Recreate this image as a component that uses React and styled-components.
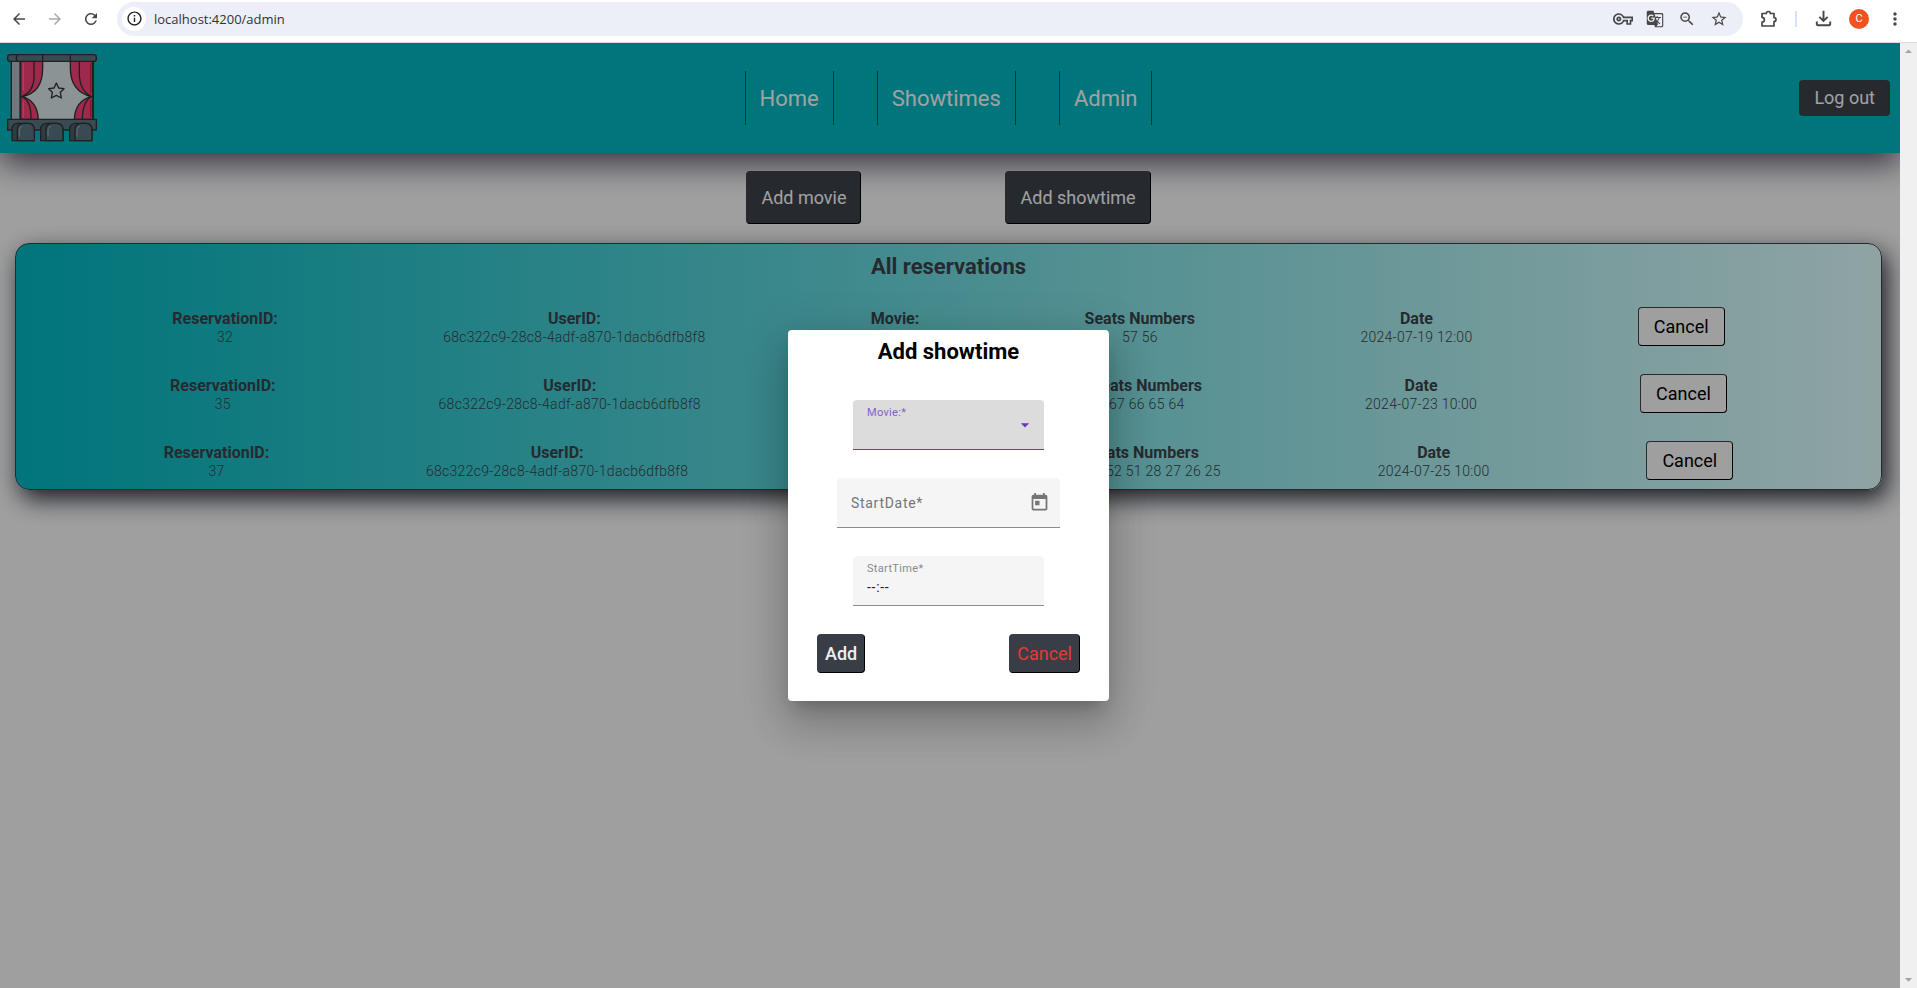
import React from "react";
import styled, { createGlobalStyle, css } from "styled-components";
import {
  MdArrowBack,
  MdArrowForward,
  MdRefresh,
  MdInfoOutline,
  MdOutlineVpnKey,
  MdGTranslate,
  MdZoomOut,
  MdStarBorder,
  MdOutlineFileDownload,
  MdMoreVert,
  MdToday,
  MdArrowDropDown,
  MdArrowDropUp,
} from "react-icons/md";

const GlobalStyle = createGlobalStyle`
  *, *::before, *::after { box-sizing: border-box; }
  body {
    margin: 0;
    font-family: Roboto, "Liberation Sans", sans-serif;
    color: #393e46;
    background: #ebebeb;
  }
  button, input, select { font-family: inherit; margin: 0; }
  h1, h2, p, dl, dd, ul { margin: 0; padding: 0; }
`;

const Shell = styled.div`
  display: grid;
  grid-template-rows: auto 1fr;
  height: 100vh;
`;

/* Browser toolbar */

const Toolbar = styled.div`
  display: flex;
  align-items: center;
  height: 43px;
  padding: 0 10px 5px 7px;
  gap: 14px;
  background: #fff;
  border-bottom: 1px solid #dcdcdc;
`;

const HistoryButtons = styled.div`
  display: flex;
  gap: 12px;
`;

const ToolButton = styled.button`
  display: grid;
  place-items: center;
  width: 24px;
  height: 24px;
  padding: 0;
  border: 0;
  background: none;
  color: ${(p) => (p.$faded ? "#a9a9a9" : "#474747")};
  font-size: ${(p) => p.$size || 18}px;
`;

const Omnibox = styled.div`
  flex: 1;
  display: flex;
  align-items: center;
  gap: 8px;
  height: 34px;
  padding: 0 12px 0 5px;
  border-radius: 17px;
  background: #eceef8;
`;

const SiteInfo = styled.button`
  display: grid;
  place-items: center;
  width: 24px;
  height: 24px;
  padding: 0;
  border: 0;
  border-radius: 50%;
  background: #fff;
  color: #1f1f1f;
  font-size: 17px;
`;

const Address = styled.input`
  flex: 1;
  min-width: 0;
  padding: 0;
  border: 0;
  outline: 0;
  background: none;
  color: #333;
  font-family: "Open Sans", "Noto Sans", sans-serif;
  font-size: 13px;
`;

const OmniActions = styled.div`
  display: flex;
  gap: 8px;
`;

const Divider = styled.span`
  width: 2px;
  height: 16px;
  background: #d3e3fd;
`;

const Avatar = styled.button`
  width: 20px;
  height: 20px;
  padding: 0;
  border: 0;
  border-radius: 50%;
  background: #f4511e;
  color: #fff;
  font-size: 11px;
`;

/* Page viewport and scroll bar */

const Viewport = styled.div`
  display: grid;
  grid-template-columns: 1fr 17px;
  min-height: 0;
`;

const ScrollBar = styled.div`
  display: flex;
  flex-direction: column;
  justify-content: space-between;
  align-items: center;
  background: #f0f0f0;
  color: #a3a3a3;
  font-size: 17px;
`;

const Page = styled.div`
  position: relative;
  overflow: hidden;
`;

const Header = styled.header`
  display: grid;
  grid-template-columns: 1fr auto 1fr;
  align-items: center;
  height: 110px;
  padding: 0 10px 0 7px;
  background: #00adb5;
  box-shadow: 0 10px 30px 0 rgba(20, 20, 45, 0.75);
`;

const Nav = styled.nav`
  display: flex;
  gap: 43px;
`;

const NavLink = styled.a`
  padding: 15px 14px 13px;
  border: solid #393e46;
  border-width: 0 1px;
  color: #eee;
  font-size: 22px;
  line-height: 26px;
  text-decoration: none;
`;

const buttonText = css`
  font-size: 18px;
  line-height: 21px;
  border-radius: 4px;
`;

const LogoutButton = styled.button`
  ${buttonText}
  justify-self: end;
  height: 36px;
  padding: 0 15px 2px;
  border: 0;
  background: #393e46;
  color: #eee;
`;

const Actions = styled.div`
  display: flex;
  justify-content: center;
  gap: 144px;
  padding: 18px 3px 19px 0;
`;

const ActionButton = styled.button`
  ${buttonText}
  height: 53px;
  padding: 0 14px;
  border: 1px outset #393e46;
  background: #393e46;
  color: #eee;
`;

const Card = styled.section`
  margin: 0 18px 0 15px;
  padding: 10px 0 9px;
  border: 1px solid #393e46;
  border-radius: 14px;
  background: linear-gradient(90deg, #00adb5, #d4f1f1);
  box-shadow: 5px 9px 25px 0 rgba(5, 8, 20, 0.85);
`;

const CardTitle = styled.h2`
  margin-bottom: 27px;
  font-size: 22px;
  line-height: 26px;
  text-align: center;
`;

const Rows = styled.div`
  display: grid;
  gap: 28px;
`;

const Row = styled.dl`
  display: flex;
  align-items: center;
  justify-content: space-evenly;
  margin: 0 -9px;
`;

const Cell = styled.div`
  padding-top: 2px;
  text-align: center;
  dt {
    font-size: 16px;
    line-height: 19px;
    font-weight: 700;
  }
  dd {
    font-size: 14px;
    line-height: 18px;
    font-weight: 300;
    letter-spacing: 0.02em;
  }
`;

const RowButton = styled.button`
  ${buttonText}
  height: 39px;
  padding: 0 15px;
  border: 1px outset #393e46;
  background: #ebebeb;
  color: #000;
`;

/* Dialog */

const Backdrop = styled.div`
  position: absolute;
  inset: 0;
  display: grid;
  place-items: center;
  padding-right: 3px;
  background: rgba(0, 0, 0, 0.32);
`;

const Dialog = styled.form`
  display: flex;
  flex-direction: column;
  align-items: center;
  width: 321px;
  padding: 9px 29px 28px;
  border-radius: 4px;
  background: #fff;
  box-shadow:
    0 11px 15px -7px rgba(0, 0, 0, 0.2),
    0 24px 38px 3px rgba(0, 0, 0, 0.14),
    0 9px 46px 8px rgba(0, 0, 0, 0.12);
`;

const DialogTitle = styled.h2`
  margin-bottom: 35px;
  color: #000;
  font-size: 22px;
  line-height: 26px;
`;

const Field = styled.div`
  display: grid;
  grid-template-columns: 1fr auto;
  align-items: center;
  align-content: ${(p) => (p.$single ? "center" : "start")};
  width: ${(p) => (p.$wide ? 223 : 191)}px;
  height: 50px;
  margin-bottom: 28px;
  padding: ${(p) => (p.$single ? "0 11px 0 14px" : "6px 9px 0 14px")};
  border-bottom: 1px solid ${(p) => (p.$active ? "#673ab7" : "#8c8c8c")};
  border-radius: 4px 4px 0 0;
  background: ${(p) => (p.$active ? "#dcdcdc" : "#f5f5f5")};

  label {
    grid-column: 1 / -1;
    color: ${(p) => (p.$active ? "#8561c5" : "#8a8a8a")};
    font-size: 11px;
    line-height: 13px;
    letter-spacing: 0.03em;
  }
`;

const TextInput = styled.input`
  width: 100%;
  min-width: 0;
  height: 24px;
  padding: 0;
  border: 0;
  outline: 0;
  background: none;
  color: #212121;
  font-size: 14px;
  letter-spacing: 0.05em;
  &::placeholder {
    color: #757575;
    opacity: 1;
  }
`;

const SelectWrap = styled.div`
  grid-column: 1 / -1;
  display: grid;
  grid-template-columns: 1fr 20px;
  align-items: center;
  height: 12px;
`;

const SelectInput = styled.select`
  appearance: none;
  height: 12px;
  padding: 0;
  border: 0;
  outline: 0;
  background: none;
  font-size: 10px;
`;

const DropArrow = styled(MdArrowDropDown)`
  align-self: center;
  width: 20px;
  height: 20px;
  margin: -4px 0;
  color: #673ab7;
`;

const CalendarButton = styled.button`
  display: grid;
  place-items: center;
  width: 20px;
  height: 24px;
  padding: 0;
  border: 0;
  background: none;
  color: #757575;
  font-size: 21px;
`;

const DialogActions = styled.div`
  display: flex;
  justify-content: space-between;
  width: 100%;
`;

const DialogButton = styled.button`
  ${buttonText}
  height: 39px;
  padding: 0 7px;
  border: 1px outset #393e46;
  background: #393e46;
  color: ${(p) => (p.$danger ? "#e53935" : "#eee")};
  font-weight: ${(p) => (p.$danger ? 400 : 500)};
`;

const LogoSvg = styled.svg`
  display: block;
  width: 90px;
  height: 88px;
`;

function Logo() {
  return (
    <LogoSvg viewBox="21 18 270 264" aria-label="Cinema" role="img" stroke="#303030" strokeWidth="4" strokeLinejoin="round">
      <rect x="34" y="36" width="246" height="180" fill="#cdd9dc" />
      <rect x="36" y="38" width="22" height="176" fill="#a3b3bd" stroke="none" />
      <path d="M60 38V214" fill="none" />
      <path d="M62 40H128V60Q128 135 66 146Q112 158 115 214H62Z" fill="#e83e70" />
      <path d="M278 40H211V60Q211 130 274 146Q226 158 223 214H278Z" fill="#e83e70" />
      <path d="M102 40V90Q100 132 66 146Q94 158 93 214M238 40V86Q242 130 274 146Q248 160 247 214" fill="none" />
      <path d="M70 44V128M70 160V208" stroke="#f0708f" strokeWidth="3" fill="none" />
      <path d="M272 44V136M272 156V208" stroke="#b51f50" strokeWidth="4" fill="none" />
      <rect x="23" y="20" width="266" height="20" rx="8" fill="#546e7a" />
      <path d="M52 20Q46 30 52 40M128 20V40M211 20V40" fill="none" />
      <path d="M169 105L176 120L192 122L181 133L184 150L169 142L154 150L157 133L146 122L162 120Z" fill="none" />
      <path d="M23 214H289V246H23Z" fill="#546e7a" />
      {[36, 122, 209].map((x) => (
        <g key={x} transform={`translate(${x} 0)`}>
          <path d="M0 278V244Q0 226 20 226H48Q66 226 67 244V278Z" fill="#455a64" />
          <path d="M16 278V246Q16 226 36 226H48Q67 226 67 246V278Z" fill="#546e7a" />
          <path d="M22 266V244Q23 236 31 235" stroke="#8fa6b1" strokeWidth="3" fill="none" />
        </g>
      ))}
    </LogoSvg>
  );
}

function PuzzleIcon() {
  return (
    <svg width="18" height="18" viewBox="0 0 18 18" fill="none" stroke="currentColor" strokeWidth="1.7" strokeLinejoin="round">
      <path d="M2 3.5H6.3A2 2 0 0 1 10.3 3.5H14V7.6A2 2 0 0 1 14 11.6V16H2V12.2A2.4 2.4 0 0 0 2 7.4Z" />
    </svg>
  );
}

const reservations = [
  { id: 32, movie: "Dune", seats: "57 56", date: "2024-07-19 12:00" },
  { id: 35, movie: "Inside Out", seats: "67 66 65 64", date: "2024-07-23 10:00" },
  { id: 37, movie: "Inside Out", seats: "54 53 52 51 28 27 26 25", date: "2024-07-25 10:00" },
];
const userId = "68c322c9-28c8-4adf-a870-1dacb6dfb8f8";

function Reservation({ item }) {
  const cells = [
    ["ReservationID:", item.id],
    ["UserID:", userId],
    ["Movie:", item.movie],
    ["Seats Numbers", item.seats],
    ["Date", item.date],
  ];
  return (
    <Row>
      {cells.map(([term, value]) => (
        <Cell key={term}>
          <dt>{term}</dt>
          <dd>{value}</dd>
        </Cell>
      ))}
      <RowButton type="button">Cancel</RowButton>
    </Row>
  );
}

function BrowserToolbar() {
  return (
    <Toolbar>
      <HistoryButtons>
        <ToolButton aria-label="Back"><MdArrowBack /></ToolButton>
        <ToolButton aria-label="Forward" $faded><MdArrowForward /></ToolButton>
        <ToolButton aria-label="Reload"><MdRefresh /></ToolButton>
      </HistoryButtons>
      <Omnibox>
        <SiteInfo aria-label="Site information"><MdInfoOutline /></SiteInfo>
        <Address aria-label="Address" defaultValue="localhost:4200/admin" />
        <OmniActions>
          <ToolButton aria-label="Passwords" $size={20}><MdOutlineVpnKey /></ToolButton>
          <ToolButton aria-label="Translate"><MdGTranslate /></ToolButton>
          <ToolButton aria-label="Zoom"><MdZoomOut /></ToolButton>
          <ToolButton aria-label="Bookmark"><MdStarBorder /></ToolButton>
        </OmniActions>
      </Omnibox>
      <ToolButton aria-label="Extensions"><PuzzleIcon /></ToolButton>
      <Divider />
      <ToolButton aria-label="Downloads" $size={23}><MdOutlineFileDownload /></ToolButton>
      <Avatar aria-label="Profile">C</Avatar>
      <ToolButton aria-label="Menu" $size={20}><MdMoreVert /></ToolButton>
    </Toolbar>
  );
}

function AddShowtimeDialog() {
  return (
    <Backdrop>
      <Dialog role="dialog" aria-labelledby="dialog-title" onSubmit={(e) => e.preventDefault()}>
        <DialogTitle id="dialog-title">Add showtime</DialogTitle>
        <Field $active>
          <label htmlFor="movie">Movie:*</label>
          <SelectWrap>
            <SelectInput id="movie" />
            <DropArrow />
          </SelectWrap>
        </Field>
        <Field $wide $single>
          <TextInput aria-label="StartDate" placeholder="StartDate*" />
          <CalendarButton type="button" aria-label="Open calendar"><MdToday /></CalendarButton>
        </Field>
        <Field>
          <label htmlFor="time">StartTime*</label>
          <TextInput id="time" defaultValue="--:--" />
        </Field>
        <DialogActions>
          <DialogButton type="submit">Add</DialogButton>
          <DialogButton type="button" $danger>Cancel</DialogButton>
        </DialogActions>
      </Dialog>
    </Backdrop>
  );
}

export default function App() {
  return (
    <Shell>
      <GlobalStyle />
      <BrowserToolbar />
      <Viewport>
        <Page>
          <Header>
            <Logo />
            <Nav>
              <NavLink href="#home">Home</NavLink>
              <NavLink href="#showtimes">Showtimes</NavLink>
              <NavLink href="#admin">Admin</NavLink>
            </Nav>
            <LogoutButton type="button">Log out</LogoutButton>
          </Header>
          <main>
            <Actions>
              <ActionButton type="button">Add movie</ActionButton>
              <ActionButton type="button">Add showtime</ActionButton>
            </Actions>
            <Card>
              <CardTitle>All reservations</CardTitle>
              <Rows>
                {reservations.map((item) => (
                  <Reservation key={item.id} item={item} />
                ))}
              </Rows>
            </Card>
          </main>
          <AddShowtimeDialog />
        </Page>
        <ScrollBar>
          <MdArrowDropUp />
          <MdArrowDropDown />
        </ScrollBar>
      </Viewport>
    </Shell>
  );
}
